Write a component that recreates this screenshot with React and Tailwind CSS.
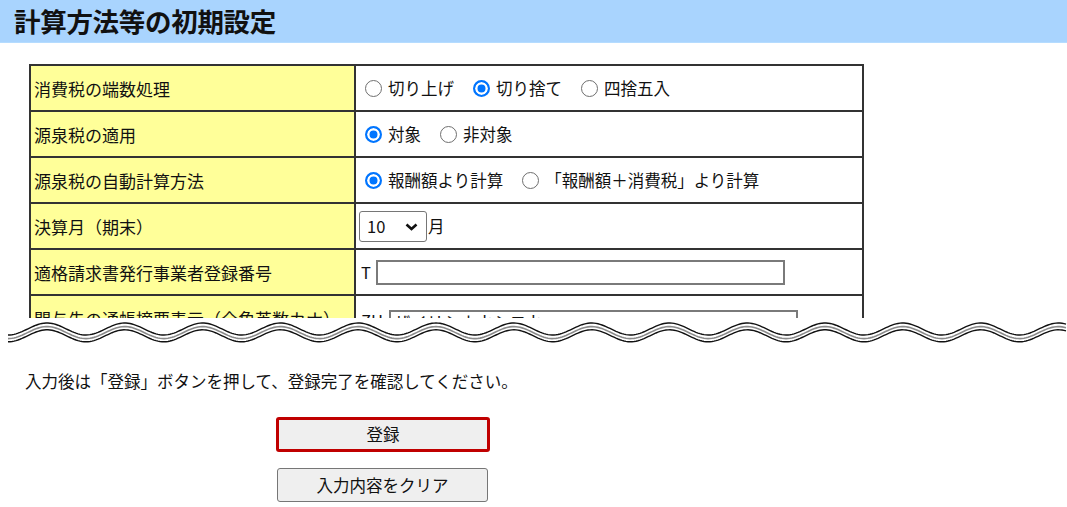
import { useState } from 'react'

const FONT = { fontFamily: '"Noto Sans CJK JP", "Noto Sans", sans-serif' }

// 波線（省略区切り）の座標を計算
function wavePath(offset) {
  const pts = []
  for (let x = 8; x <= 1067; x += 2) {
    const y = 11 + offset - 6 * Math.cos((2 * Math.PI * (x - 47)) / 77.8)
    pts.push(`${x},${y.toFixed(2)}`)
  }
  return 'M' + pts.join(' L')
}

function Radio({ name, value, checked, onChange, label }) {
  return (
    <label className="inline-flex items-center mr-[13px]">
      <input
        type="radio"
        name={name}
        value={value}
        checked={checked}
        onChange={onChange}
        className="appearance-none shrink-0 size-[17px] ml-[6px] mr-[6px] rounded-full border-[1.5px] border-[#6f6f6f] bg-white checked:border-2 checked:border-[#0075ff] checked:bg-[#0075ff] checked:shadow-[inset_0_0_0_2.5px_#fff]"
      />
      <span>{label}</span>
    </label>
  )
}

function Row({ label, children }) {
  return (
    <tr>
      <td className="h-[46px] w-[325px] border-2 border-[#333] bg-[#ffff99] pl-[3px] text-[17px] leading-none align-middle">
        {label}
      </td>
      <td className="h-[46px] border-2 border-[#333] bg-white pl-[3px] text-[16.5px] leading-none align-middle">
        {children}
      </td>
    </tr>
  )
}

export default function App() {
  const [hasu, setHasu] = useState('down')
  const [gensen, setGensen] = useState('on')
  const [calc, setCalc] = useState('fee')
  const [month, setMonth] = useState('10')
  const [tno, setTno] = useState('')
  const [kana, setKana] = useState('ザイリシホウシコウ')

  return (
    <div className="w-[1067px] bg-white text-[#111]" style={FONT}>
      {/* 見出し */}
      <div className="h-[43px] bg-[#a9d4fe] border-b border-[#b5dcff] flex items-center pl-[14px]">
        <h1 className="text-[26.5px] font-bold leading-none tracking-[-0.3px]">計算方法等の初期設定</h1>
      </div>

      {/* 設定テーブル（途中で省略） */}
      <div className="h-[275px] overflow-hidden pt-[21px] pl-[29px]">
        <table className="w-[835px] border-collapse">
          <tbody>
            <Row label="消費税の端数処理">
              <div className="flex items-center">
                <Radio name="hasu" value="up" label="切り上げ" checked={hasu === 'up'} onChange={() => setHasu('up')} />
                <Radio name="hasu" value="down" label="切り捨て" checked={hasu === 'down'} onChange={() => setHasu('down')} />
                <Radio name="hasu" value="round" label="四捨五入" checked={hasu === 'round'} onChange={() => setHasu('round')} />
              </div>
            </Row>
            <Row label="源泉税の適用">
              <div className="flex items-center">
                <Radio name="gensen" value="on" label="対象" checked={gensen === 'on'} onChange={() => setGensen('on')} />
                <Radio name="gensen" value="off" label="非対象" checked={gensen === 'off'} onChange={() => setGensen('off')} />
              </div>
            </Row>
            <Row label="源泉税の自動計算方法">
              <div className="flex items-center">
                <Radio name="calc" value="fee" label="報酬額より計算" checked={calc === 'fee'} onChange={() => setCalc('fee')} />
                <Radio name="calc" value="tax" label="「報酬額＋消費税」より計算" checked={calc === 'tax'} onChange={() => setCalc('tax')} />
              </div>
            </Row>
            <Row label="決算月（期末）">
              <div className="flex items-center">
                <div className="relative">
                  <select
                    value={month}
                    onChange={(e) => setMonth(e.target.value)}
                    className="appearance-none w-[68px] h-[31px] border border-[#767676] rounded-[3px] bg-white pl-[7px] text-[16.5px] leading-none"
                  >
                    {Array.from({ length: 12 }, (_, i) => (
                      <option key={i} value={String(i + 1)}>{i + 1}</option>
                    ))}
                  </select>
                  <svg className="pointer-events-none absolute right-[9px] top-[12px]" width="13" height="8" viewBox="0 0 13 8">
                    <path d="M1.5 1.5 L6.5 6 L11.5 1.5" fill="none" stroke="#111" strokeWidth="2.6" />
                  </svg>
                </div>
                <span className="ml-px">月</span>
              </div>
            </Row>
            <Row label="適格請求書発行事業者登録番号">
              <div className="flex items-center pl-[2px]">
                <span className="w-[15px]">T</span>
                <input
                  type="text"
                  value={tno}
                  onChange={(e) => setTno(e.target.value)}
                  className="w-[409px] h-[25px] border-2 border-[#7a7a7a] px-[3px] text-[16.5px]"
                />
              </div>
            </Row>
            <Row label="関与先の通帳摘要表示（全角英数カナ）">
              <div className="flex items-start pt-[8px] pl-[2px]">
                <span className="w-[28px] pt-[2px]">ZH</span>
                <input
                  type="text"
                  value={kana}
                  onChange={(e) => setKana(e.target.value)}
                  className="w-[409px] h-[25px] border-2 border-[#7a7a7a] px-[3px] text-[16.5px]"
                />
              </div>
            </Row>
          </tbody>
        </table>
      </div>

      {/* 波線 */}
      <svg width="1067" height="32" viewBox="0 0 1067 32" className="block">
        <path d={wavePath(0)} fill="none" stroke="#111" strokeWidth="1.4" />
        <path d={wavePath(3.6)} fill="none" stroke="#8a8a8a" strokeWidth="1.6" />
        <path d={wavePath(6.8)} fill="none" stroke="#111" strokeWidth="1.4" />
      </svg>

      {/* 案内文とボタン */}
      <p className="mt-[19px] pl-[25px] text-[16.5px] leading-[24px]">
        入力後は「登録」ボタンを押して、登録完了を確認してください。
      </p>

      <div className="flex flex-col mt-[24px]">
        <button className="ml-[276px] w-[214px] h-[35px] border-[3px] border-[#c00000] rounded-[3px] bg-[#efefef] text-[16.5px] leading-none">
          登録
        </button>
        <button className="ml-[277px] mt-[16px] w-[211px] h-[34px] border border-[#767676] rounded-[3px] bg-[#efefef] text-[16.5px] leading-none">
          入力内容をクリア
        </button>
      </div>
    </div>
  )
}
